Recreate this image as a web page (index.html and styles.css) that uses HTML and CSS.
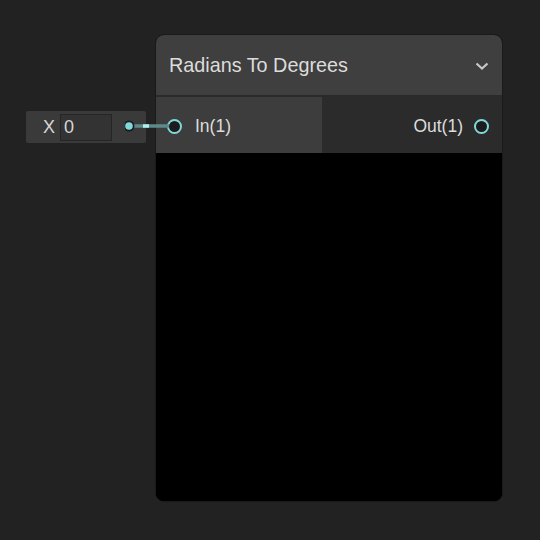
FILE: index.html
```html
<!DOCTYPE html>
<html>
<head>
<meta charset="utf-8">
<link rel="stylesheet" href="styles.css">
</head>
<body>
<div class="canvas">
  <div class="widget-col">
    <div class="widget">
      <span class="wlabel">X</span>
      <span class="wbox">0</span>
    </div>
  </div>
  <div class="node">
    <div class="header">
      <span class="title">Radians To Degrees</span>
      <svg class="chev" width="14" height="10" viewBox="0 0 14 10"><path d="M1.5 2.5 L7 7.5 L12.5 2.5" fill="none" stroke="#c8c8c8" stroke-width="2.2"/></svg>
    </div>
    <div class="ports">
      <div class="pin">
        <span class="port"></span>
        <span class="plabel">In(1)</span>
      </div>
      <div class="pout">
        <span class="plabel">Out(1)</span>
        <span class="port"></span>
      </div>
    </div>
    <div class="body"></div>
  </div>
  <svg class="wire" width="50" height="14" viewBox="0 0 50 14">
    <line x1="4" y1="7" x2="44" y2="7" stroke="#5e8a8c" stroke-width="3.5"/>
    <line x1="18" y1="7" x2="24" y2="7" stroke="#b0eef0" stroke-width="3.5"/>
    <circle cx="4" cy="7" r="5.5" fill="#1b1b1b"/>
    <circle cx="4" cy="7" r="3.8" fill="#7fd8dc"/>
  </svg>
</div>
</body>
</html>
```
FILE: styles.css
```css
html, body {
  margin: 0;
  padding: 0;
  background: #222222;
  width: 540px;
  height: 540px;
  overflow: hidden;
  font-family: "Liberation Sans", Arial, sans-serif;
}
.canvas {
  position: relative;
  display: flex;
  align-items: flex-start;
  padding-top: 34px;
  padding-left: 26px;
}
.widget-col {
  padding-top: 77px;
  width: 129px;
}
.widget {
  width: 120px;
  height: 32px;
  background: #3a3a3a;
  border-radius: 2px;
  display: flex;
  align-items: center;
  box-sizing: border-box;
  padding-left: 17px;
}
.wlabel {
  color: #d6d6d6;
  font-size: 18px;
  width: 17px;
}
.wbox {
  width: 52px;
  height: 27px;
  box-sizing: border-box;
  background: #333333;
  border: 1px solid #262626;
  color: #d6d6d6;
  font-size: 18px;
  line-height: 25px;
  padding-left: 3px;
}
.node {
  width: 348px;
  height: 468px;
  box-sizing: border-box;
  border: 1px solid #1a1a1a;
  border-radius: 9px;
  background: #000;
  overflow: hidden;
  display: flex;
  flex-direction: column;
}
.header {
  height: 60px;
  background: #3f3f3f;
  border-bottom: 2px solid #2a2a2a;
  display: flex;
  align-items: center;
  justify-content: space-between;
  padding: 0 13px 0 13px;
  flex-shrink: 0;
}
.title {
  color: #dcdcdc;
  font-size: 19.8px;
  margin-top: 1px;
}
.chev {
  display: block;
  margin-top: 2px;
}
.ports {
  height: 56px;
  display: flex;
  flex-shrink: 0;
}
.pin {
  width: 166px;
  box-sizing: border-box;
  background: #3d3d3d;
  display: flex;
  align-items: center;
  padding-left: 11px;
  gap: 13px;
}
.pout {
  flex: 1;
  background: #2b2b2b;
  display: flex;
  align-items: center;
  justify-content: flex-end;
  padding-right: 13px;
  gap: 11px;
}
.port {
  width: 11px;
  height: 11px;
  border: 2px solid #7fd8dc;
  border-radius: 50%;
  background: #1c1c1c;
  margin-top: 2px;
}
.plabel {
  color: #dcdcdc;
  font-size: 17.5px;
  margin-top: 3px;
}
.body {
  flex: 1;
  background: #000;
}
.wire {
  position: absolute;
  left: 125px;
  top: 119px;
}
```
